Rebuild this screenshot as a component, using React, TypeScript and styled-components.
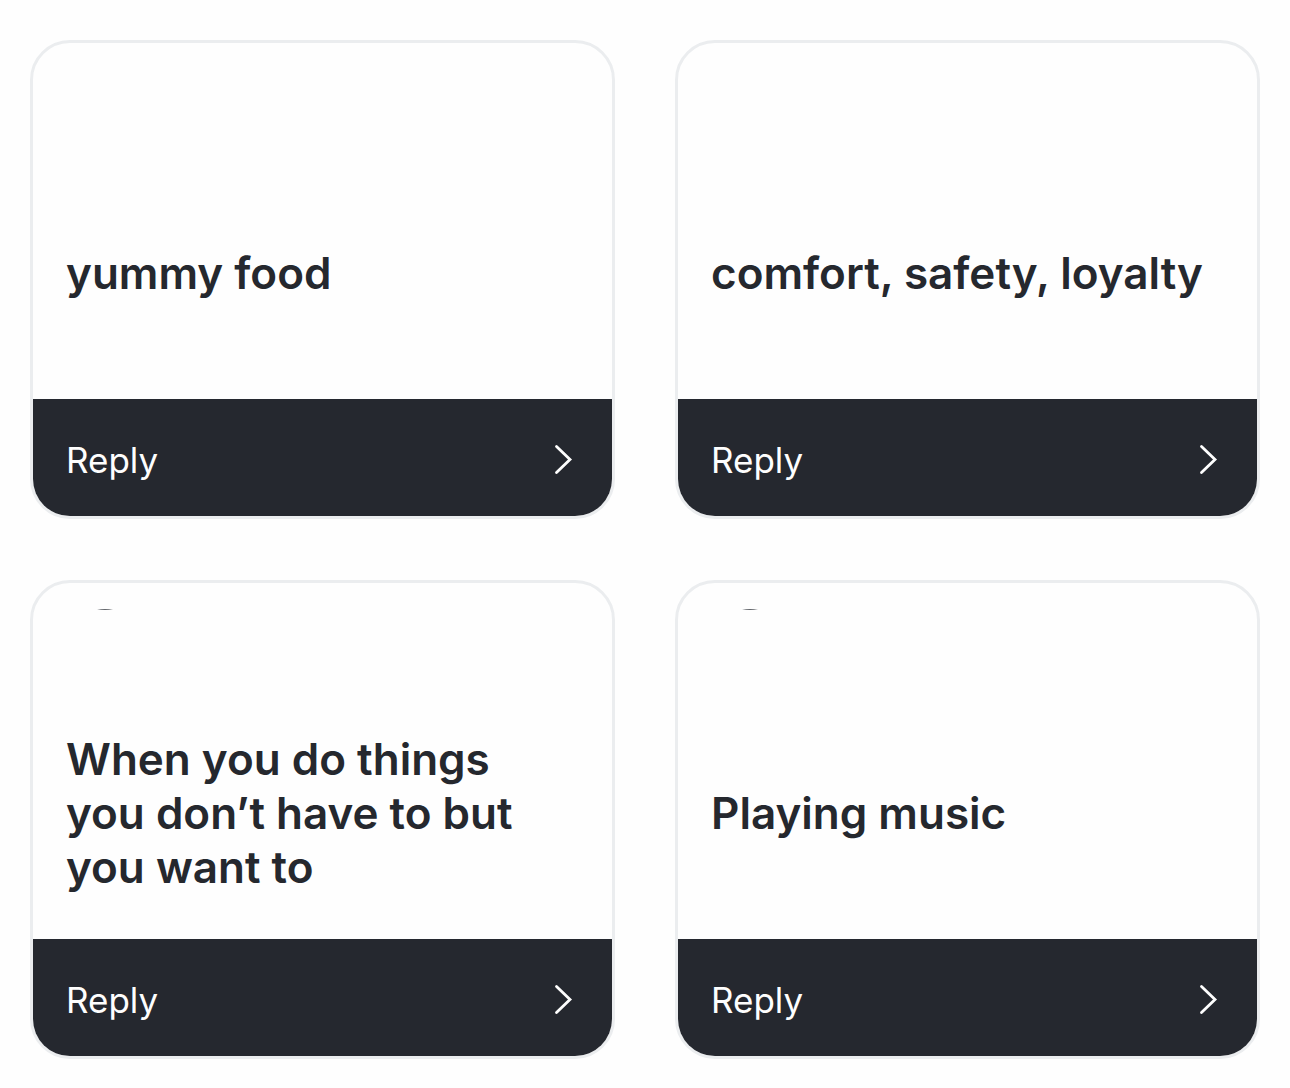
import React from "react";
import styled, { createGlobalStyle } from "styled-components";

const GlobalStyle = createGlobalStyle`
  *, *::before, *::after { box-sizing: border-box; }
  body {
    margin: 0;
    background: #fefefe;
    color: #25282e;
    font-family: Inter, "Liberation Sans", sans-serif;
  }
`;

const Grid = styled.main`
  display: grid;
  grid-template-columns: repeat(2, minmax(0, 1fr));
  gap: 61px 60px;
  padding: 40px 30px 30px;
`;

const Card = styled.article`
  display: flex;
  flex-direction: column;
  min-height: 479px;
  border: 3px solid #ebedef;
  border-radius: 40px;
  background: #fefefe;
  overflow: hidden;
`;

const Header = styled.div`
  height: 104px;
  padding: 26px 63px 0;
`;

const Message = styled.div`
  flex: 1;
  display: flex;
  align-items: center;
  padding: 32px 33px;
`;

const Answer = styled.p`
  margin: 0;
  font-size: 44px;
  font-weight: 600;
  line-height: 54px;
`;

const ReplyButton = styled.button`
  display: flex;
  align-items: center;
  justify-content: space-between;
  height: 117px;
  padding: 4px 38px 0 33px;
  border: 0;
  background: #25282f;
  color: #fefefe;
  font-family: inherit;
  font-size: 35px;
  font-weight: 400;
  cursor: pointer;
`;

const answers = [
  { text: "yummy food", avatar: false },
  { text: "comfort, safety, loyalty", avatar: false },
  { text: "When you do things you don’t have to but you want to", avatar: true },
  { text: "Playing music", avatar: true },
];

const Arc = () => (
  <svg width="18" height="2" viewBox="0 0 18 2" fill="none" aria-hidden="true" display="block">
    <path d="M1 1Q9 -1 17 1Z" fill="#62656a" />
  </svg>
);

const Chevron = () => (
  <svg width="20" height="32" viewBox="0 0 20 32" fill="none" aria-hidden="true">
    <path
      d="M2.5 2.5L16 15.5L2.5 28.5"
      stroke="currentColor"
      strokeWidth="2.8"
      strokeLinecap="round"
      strokeLinejoin="miter"
    />
  </svg>
);

export default function App() {
  return (
    <>
      <GlobalStyle />
      <Grid>
        {answers.map(({ text, avatar }) => (
          <Card key={text}>
            <Header>{avatar && <Arc />}</Header>
            <Message>
              <Answer>{text}</Answer>
            </Message>
            <ReplyButton type="button">
              Reply
              <Chevron />
            </ReplyButton>
          </Card>
        ))}
      </Grid>
    </>
  );
}
